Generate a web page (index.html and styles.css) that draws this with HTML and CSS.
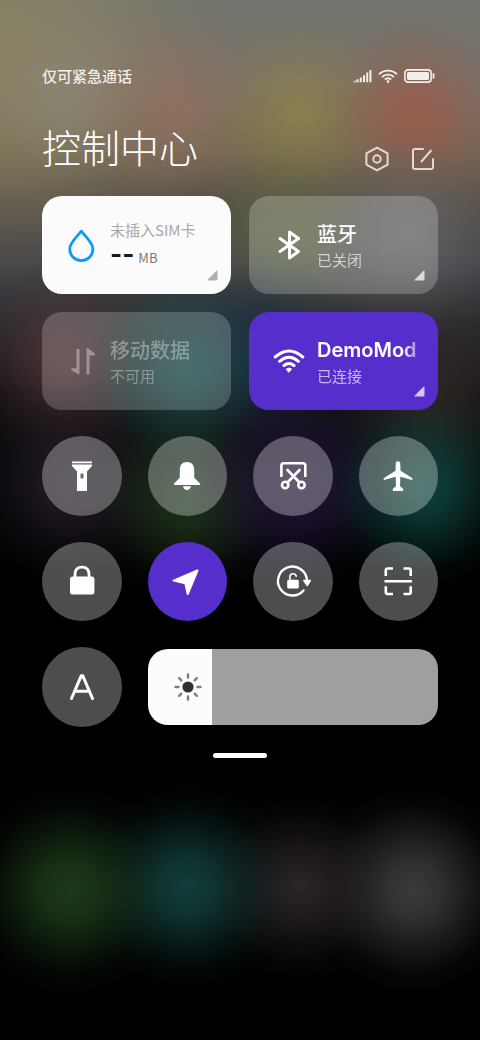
FILE: index.html
```html
<!DOCTYPE html>
<html lang="zh-CN">
<head>
<meta charset="utf-8">
<meta name="viewport" content="width=device-width, initial-scale=1">
<title>控制中心</title>
<link rel="stylesheet" href="styles.css">
</head>
<body>
<main class="panel">
  <div class="status">
    <span class="carrier">仅可紧急通话</span>
    <div class="status-icons">
      <svg width="19" height="14" viewBox="0 0 19 14" fill="currentColor"><path d="M0 13.2 2.800 11V13.200ZM3.600 10.200h2v3h-2ZM6.800 8.400h2v4.800h-2ZM10 6.200h2v7h-2ZM13.200 3.600h2v9.600h-2ZM16.400 1h2v12.200h-2Z"/></svg>
      <svg width="20" height="14" viewBox="0 0 20 14" fill="none" stroke="currentColor" stroke-width="1.900"><path d="M1 5.200a13 13 0 0 1 18 0M4 8a8.800 8.800 0 0 1 12 0M6.800 10.600a5 5 0 0 1 6.400 0"/><circle cx="10" cy="12.600" r="1.300" fill="currentColor" stroke="none"/></svg>
      <svg width="31" height="14" viewBox="0 0 31 14" fill="none" stroke="currentColor"><rect x=".9" y=".9" width="26.200" height="12.200" rx="3.200" stroke-width="1.600"/><rect x="3" y="3" width="22" height="8" rx="1.500" fill="currentColor" stroke="none"/><path d="M29.500 5.200v3.600" stroke-width="1.800" stroke-linecap="round"/></svg>
    </div>
  </div>

  <header class="header">
    <h1>控制中心</h1>
    <div class="actions">
      <button class="action" aria-label="设置"><svg width="26" height="26" viewBox="0 0 26 26" fill="none" stroke="currentColor" stroke-width="2" stroke-linejoin="round"><path d="M13 1.600 23.600 7.400V18.600L13 24.400 2.400 18.600V7.400Z"/><circle cx="13" cy="13" r="3.700"/></svg></button>
      <button class="action" aria-label="编辑"><svg width="26" height="26" viewBox="0 0 26 26" fill="none" stroke="currentColor" stroke-width="2" stroke-linecap="round" stroke-linejoin="round"><path d="M13 3H5Q3 3 3 5V21Q3 23 5 23H21Q23 23 23 21V13M11.500 15.500 21 4.500"/></svg></button>
    </div>
  </header>

  <section class="cards">
    <button class="card card-light">
      <svg class="card-icon" width="32" height="34" viewBox="0 0 32 34" fill="none" stroke="#0a9bfa" stroke-width="2.800" stroke-linejoin="round"><path d="M15.300 3.200C19.300 8.500 26.900 14.500 26.900 21A11.600 11.600 0 0 1 3.700 21C3.700 14.500 11.300 8.500 15.300 3.200Z"/></svg>
      <span class="card-text"><span class="sim">未插入SIM卡</span><span class="usage"><b>--</b><small>MB</small></span></span>
      <svg class="corner" viewBox="0 0 11 11"><path d="M9.500.8Q10.500 0 10.500 1.200V9Q10.500 10.500 9 10.500H1Q0 10.500.8 9.500Z"/></svg>
    </button>
    <button class="card">
      <svg class="card-icon" width="32" height="34" viewBox="0 0 32 34" fill="none" stroke="currentColor" stroke-width="3" stroke-linecap="round" stroke-linejoin="round"><path d="M7 10.500 25.500 23.500 16.500 30V4L25.500 10.500 7 23.500"/></svg>
      <span class="card-text"><span class="name">蓝牙</span><span class="state">已关闭</span></span>
      <svg class="corner" viewBox="0 0 11 11"><path d="M9.500.8Q10.500 0 10.500 1.200V9Q10.500 10.500 9 10.500H1Q0 10.500.8 9.500Z"/></svg>
    </button>
    <button class="card card-off">
      <svg class="card-icon" width="32" height="34" viewBox="0 0 32 34" fill="currentColor"><path d="M10.500 5h3v25q-.6.700-1.600 0L5.200 26q-.8-1.800 1-1.800h4.300ZM20.500 30.500h3V11.500h5q1.200-1 .2-2L22 4.300Q21 3.800 20.500 4.500Z"/></svg>
      <span class="card-text"><span class="name">移动数据</span><span class="state">不可用</span></span>
    </button>
    <button class="card card-on">
      <svg class="card-icon" width="32" height="34" viewBox="0 0 32 34" fill="none" stroke="currentColor" stroke-width="3" stroke-linecap="round"><path d="M2.200 13Q16 1 29.800 13M6.600 17.300Q16 9.300 25.400 17.300M11 21.500Q16 17.400 21 21.500"/><path d="M13.500 25Q16 23 18.500 25L16 28Z" fill="currentColor" stroke-width="1" stroke-linejoin="round"/></svg>
      <span class="card-text"><span class="name fade">DemoMod</span><span class="state">已连接</span></span>
      <svg class="corner" viewBox="0 0 11 11"><path d="M9.500.8Q10.500 0 10.500 1.200V9Q10.500 10.500 9 10.500H1Q0 10.500.8 9.500Z"/></svg>
    </button>
  </section>

  <section class="toggles">
    <button class="toggle" aria-label="手电筒"><svg viewBox="0 0 36 36" fill="currentColor"><path d="M8 3.500h20v1.800H8ZM8 6.500h20v1.500L23 13.500V33H13V13.500L8 8Z"/><rect x="16.500" y="15.500" width="3" height="5" rx="1" fill="#6b666c"/></svg></button>
    <button class="toggle" aria-label="铃声"><svg viewBox="0 0 36 36" fill="currentColor"><path d="M18 4C22.600 4 25.200 7 25.200 11.500V19Q25.200 20 26 20.600L31 25.500Q31.600 27 30 27H6Q4.400 27 5 25.500L10 20.600Q10.800 20 10.800 19V11.500C10.800 7 13.400 4 18 4ZM14 28.200H22Q21 32 18 32T14 28.200Z"/></svg></button>
    <button class="toggle" aria-label="截屏"><svg viewBox="0 0 36 36" fill="none" stroke="currentColor" stroke-width="2.600" stroke-linecap="round" stroke-linejoin="round"><path d="M6.400 19V7.500Q6.400 5.200 8.700 5.200H28Q30.300 5.200 30.300 7.500V19" stroke-linecap="butt"/><path d="M12.500 12 24.500 24.500M24.500 12 12.500 24.500"/><circle cx="10.200" cy="27" r="3.200"/><circle cx="26.500" cy="27" r="3.200"/></svg></button>
    <button class="toggle" aria-label="飞行模式"><svg viewBox="0 0 36 36" fill="currentColor"><path d="M15.800 4.500Q18 2 20.200 4.500L20.500 12.800 32 20Q33 21 32 22L20.300 18.700 20 28.300 23.300 31Q23.500 33 22.500 33H13.500Q12.500 33 12.700 31L16 28.300 15.700 18.700 4 22Q3 21 4 20L15.500 12.800Z"/></svg></button>
    <button class="toggle" aria-label="锁屏"><svg viewBox="0 0 36 36"><path d="M11 15V11.500Q11 4.200 18 4.200T25 11.500V15" fill="none" stroke="currentColor" stroke-width="2.800"/><rect x="6" y="13.500" width="24.400" height="18" rx="2.500" fill="currentColor"/></svg></button>
    <button class="toggle toggle-on" aria-label="定位"><svg viewBox="0 0 36 36" fill="currentColor" stroke="currentColor" stroke-width="2" stroke-linejoin="round"><path d="M28.500 7.500 18.700 31 16.300 20.400 4.500 17.600Z"/></svg></button>
    <button class="toggle" aria-label="方向锁定"><svg viewBox="0 0 36 36" fill="none" stroke="currentColor" stroke-width="2.400"><path d="M28.500 27.500A14.500 14.500 0 1 1 32 18" stroke-linecap="round"/><path d="M28.800 17.500h6.700L32.300 22.500Z" fill="currentColor" stroke-width="1.500" stroke-linejoin="round"/><rect x="12.200" y="16.800" width="11.600" height="8.600" rx="1.500" fill="currentColor" stroke="none"/><path d="M15 17V13.500Q15 10.800 18 10.800T21.400 13.800" stroke-width="1.600"/></svg></button>
    <button class="toggle" aria-label="扫一扫"><svg viewBox="0 0 36 36" fill="none" stroke="currentColor" stroke-width="2.600" stroke-linejoin="round"><path d="M4.500 18.200H32M5.800 13V7.500Q5.800 5.500 7.800 5.500H13M23.500 5.500H28.700Q30.700 5.500 30.700 7.500V13M5.800 23.200V29Q5.800 31 7.800 31H13M23.500 31H28.700Q30.700 31 30.700 29V23.200"/></svg></button>
    <button class="toggle" aria-label="自动亮度"><svg viewBox="0 0 36 36" fill="none" stroke="currentColor" stroke-width="3" stroke-linecap="round" stroke-linejoin="round"><path d="M7.500 29.500 17.200 6.800H18.800L28.500 29.500M11.500 22.300H24.500"/></svg></button>
    <label class="brightness">
      <input type="range" min="0" max="100" value="22" aria-label="亮度">
      <svg class="sun" viewBox="0 0 30 30"><circle cx="15" cy="15" r="5.600" fill="#303030"/><path d="M15 2.500V5.500M15 24.500V27.500M2.500 15H5.500M24.500 15H27.500M6.200 6.200 8.300 8.300M21.700 21.700 23.800 23.800M6.200 23.800 8.300 21.700M21.700 8.300 23.800 6.200" stroke="#7d7d7d" stroke-width="2.400" stroke-linecap="round"/></svg>
    </label>
  </section>

  <div class="handle"></div>
</main>
</body>
</html>
```
FILE: styles.css
```css
* {
  box-sizing: border-box;
}

body {
  margin: 0;
  min-height: 100vh;
  color: #fff;
  font-family: "Noto Sans CJK SC", "Noto Sans", sans-serif;
  background:
    radial-gradient(circle 108px at 70px 890px, #22451fd0, #22451fb0 25%, #22451f58 55%, #22451f14 80%, #22451f00),
    radial-gradient(circle 108px at 187px 887px, #134642e0, #134642b8 25%, #13464258 55%, #13464214 80%, #13464200),
    radial-gradient(circle 100px at 300px 887px, #352c32d0, #352c32a0 25%, #352c3250 55%, #352c3214 80%, #352c3200),
    radial-gradient(circle 108px at 413px 890px, #404040e8, #404040c0 25%, #40404060 55%, #40404014 80%, #40404000),
    radial-gradient(circle 105px at 422px 488px, #0d4b43e0, #0d4b43b0 25%, #0d4b4358 55%, #0d4b4314 80%, #0d4b4300),
    radial-gradient(circle 110px at 295px 485px, #26153fd8, #26153fb0 25%, #26153f60 55%, #26153f18 80%, #26153f00),
    radial-gradient(circle 105px at 187px 500px, #233c20d0, #233c20a8 25%, #233c2058 55%, #233c2014 80%, #233c2000),
    radial-gradient(circle 105px at 70px 485px, #2a202ed0, #2a202ea0 25%, #2a202e50 55%, #2a202e18 80%, #2a202e00),
    radial-gradient(circle 110px at 185px 370px, #1d5552d8, #1d5552a8 25%, #1d555258 55%, #1d555214 80%, #1d555200),
    radial-gradient(circle 105px at 65px 360px, #5a3a3cc8, #5a3a3c98 25%, #5a3a3c48 55%, #5a3a3c14 80%, #5a3a3c00),
    radial-gradient(circle 110px at 270px 350px, #1a2846c0, #1a284698 25%, #1a284650 55%, #1a284614 80%, #1a284600),
    radial-gradient(circle 120px at 430px 390px, #3a302ca0, #3a302c80 25%, #3a302c40 55%, #3a302c10 80%, #3a302c00),
    radial-gradient(circle 110px at 405px 235px, #68686cc8, #68686c98 25%, #68686c48 55%, #68686c14 80%, #68686c00),
    radial-gradient(circle 110px at 290px 240px, #5c6740d0, #5c6740a0 25%, #5c674048 55%, #5c674014 80%, #5c674000),
    radial-gradient(circle 100px at 415px 114px, #a05848c8, #a0584898 25%, #a0584848 55%, #a0584814 80%, #a0584800),
    radial-gradient(circle 105px at 300px 115px, #8f8446c0, #8f844690 25%, #8f844648 55%, #8f844614 80%, #8f844600),
    radial-gradient(circle 105px at 175px 108px, #98705fb0, #98705f80 25%, #98705f40 55%, #98705f10 80%, #98705f00),
    radial-gradient(circle 90px at 70px 95px, #8e8876a0, #8e887680 25%, #8e887640 55%, #8e887610 80%, #8e887600),
    radial-gradient(circle 240px at 0 50px, #8c8462e8, #8c8462b0 25%, #8c846260 55%, #8c846218 80%, #8c846200),
    linear-gradient(#72746e, #78726a 80px, #716654 150px, #595248 200px, #47464a 260px, #2c2c30 320px, #111012 390px, #070709 460px, #000 570px) #000;
}

button {
  padding: 0;
  border: 0;
  color: inherit;
  font: inherit;
  background: none;
}

svg {
  display: block;
}

.panel {
  padding: 64px 42px 0;
}

.status {
  display: flex;
  align-items: center;
  justify-content: space-between;
  height: 24px;
  color: #f2eeea;
}

.carrier {
  font-size: 15px;
  font-weight: 500;
  line-height: 20px;
}

.status-icons {
  display: flex;
  gap: 6px;
  padding-right: 3px;
}

.header {
  display: flex;
  align-items: flex-end;
  justify-content: space-between;
  height: 84px;
}

h1 {
  margin: 0 0 4px;
  font-size: 39px;
  font-weight: 300;
  line-height: 44px;
}

.actions {
  display: flex;
  gap: 20px;
  padding-right: 2px;
  color: #e3d8d3;
}

.cards {
  display: grid;
  grid-template-columns: repeat(2, minmax(0, 1fr));
  gap: 18px;
  margin-top: 24px;
}

.card {
  position: relative;
  display: flex;
  align-items: center;
  gap: 12px;
  height: 98px;
  padding: 0 18px 0 24px;
  border-radius: 20px;
  text-align: left;
  background: #ffffff38;
}

.card-light {
  color: #1a1a1a;
  background: #fbfbfb;
}

.card-on {
  background: #562ecb;
}

.card-off {
  background: #ffffff33;
}

.card-off .card-icon,
.card-off .card-text {
  opacity: 0.35;
}

.card-icon {
  flex: none;
}

.card-text {
  display: flex;
  flex: 1;
  flex-direction: column;
  min-width: 0;
  padding-top: 2px;
}

.name {
  font-size: 20px;
  font-weight: 500;
  line-height: 28px;
}

.fade {
  white-space: nowrap;
  font-family: Inter, "Noto Sans CJK SC", sans-serif;
  font-weight: 600;
  mask-image: linear-gradient(to right, #000 82%, #0005);
}

.state {
  font-size: 15px;
  line-height: 24px;
  opacity: 0.65;
}

.card-off .state {
  opacity: 1;
}

.sim {
  font-size: 15px;
  line-height: 20px;
  color: #a8a8a8;
}

.usage {
  display: flex;
  align-items: baseline;
  gap: 4px;
  line-height: 28px;
}

.usage b {
  font-family: Inter, sans-serif;
  font-size: 26px;
}

.usage small {
  font-size: 13px;
  color: #777;
}

.corner {
  position: absolute;
  right: 13px;
  bottom: 13px;
  width: 11px;
  height: 11px;
  fill: #ffffffbb;
}

.card-light .corner {
  fill: #b0b0b0;
}

.toggles {
  display: grid;
  grid-template-columns: repeat(4, minmax(0, 1fr));
  gap: 26px;
  margin-top: 26px;
}

.toggle {
  display: grid;
  place-items: center;
  aspect-ratio: 1;
  border-radius: 50%;
  background: #ffffff4d;
}

.toggle svg {
  width: 36px;
  height: 36px;
}

.toggle-on {
  background: #562ecb;
}

.brightness {
  position: relative;
  grid-column: span 3;
  align-self: center;
  height: 76px;
}

.brightness input {
  display: block;
  width: 100%;
  height: 100%;
  margin: 0;
  border-radius: 20px;
  appearance: none;
  background: linear-gradient(to right, #fcfcfc 22%, #9f9f9f 22%);
}

.brightness input::-webkit-slider-thumb {
  appearance: none;
  width: 4px;
  height: 76px;
  background: transparent;
}

.sun {
  position: absolute;
  top: 23px;
  left: 25px;
  width: 30px;
  height: 30px;
  pointer-events: none;
}

.handle {
  width: 54px;
  height: 5px;
  margin: 26px auto 0;
  border-radius: 3px;
  background: #fff;
}
```
